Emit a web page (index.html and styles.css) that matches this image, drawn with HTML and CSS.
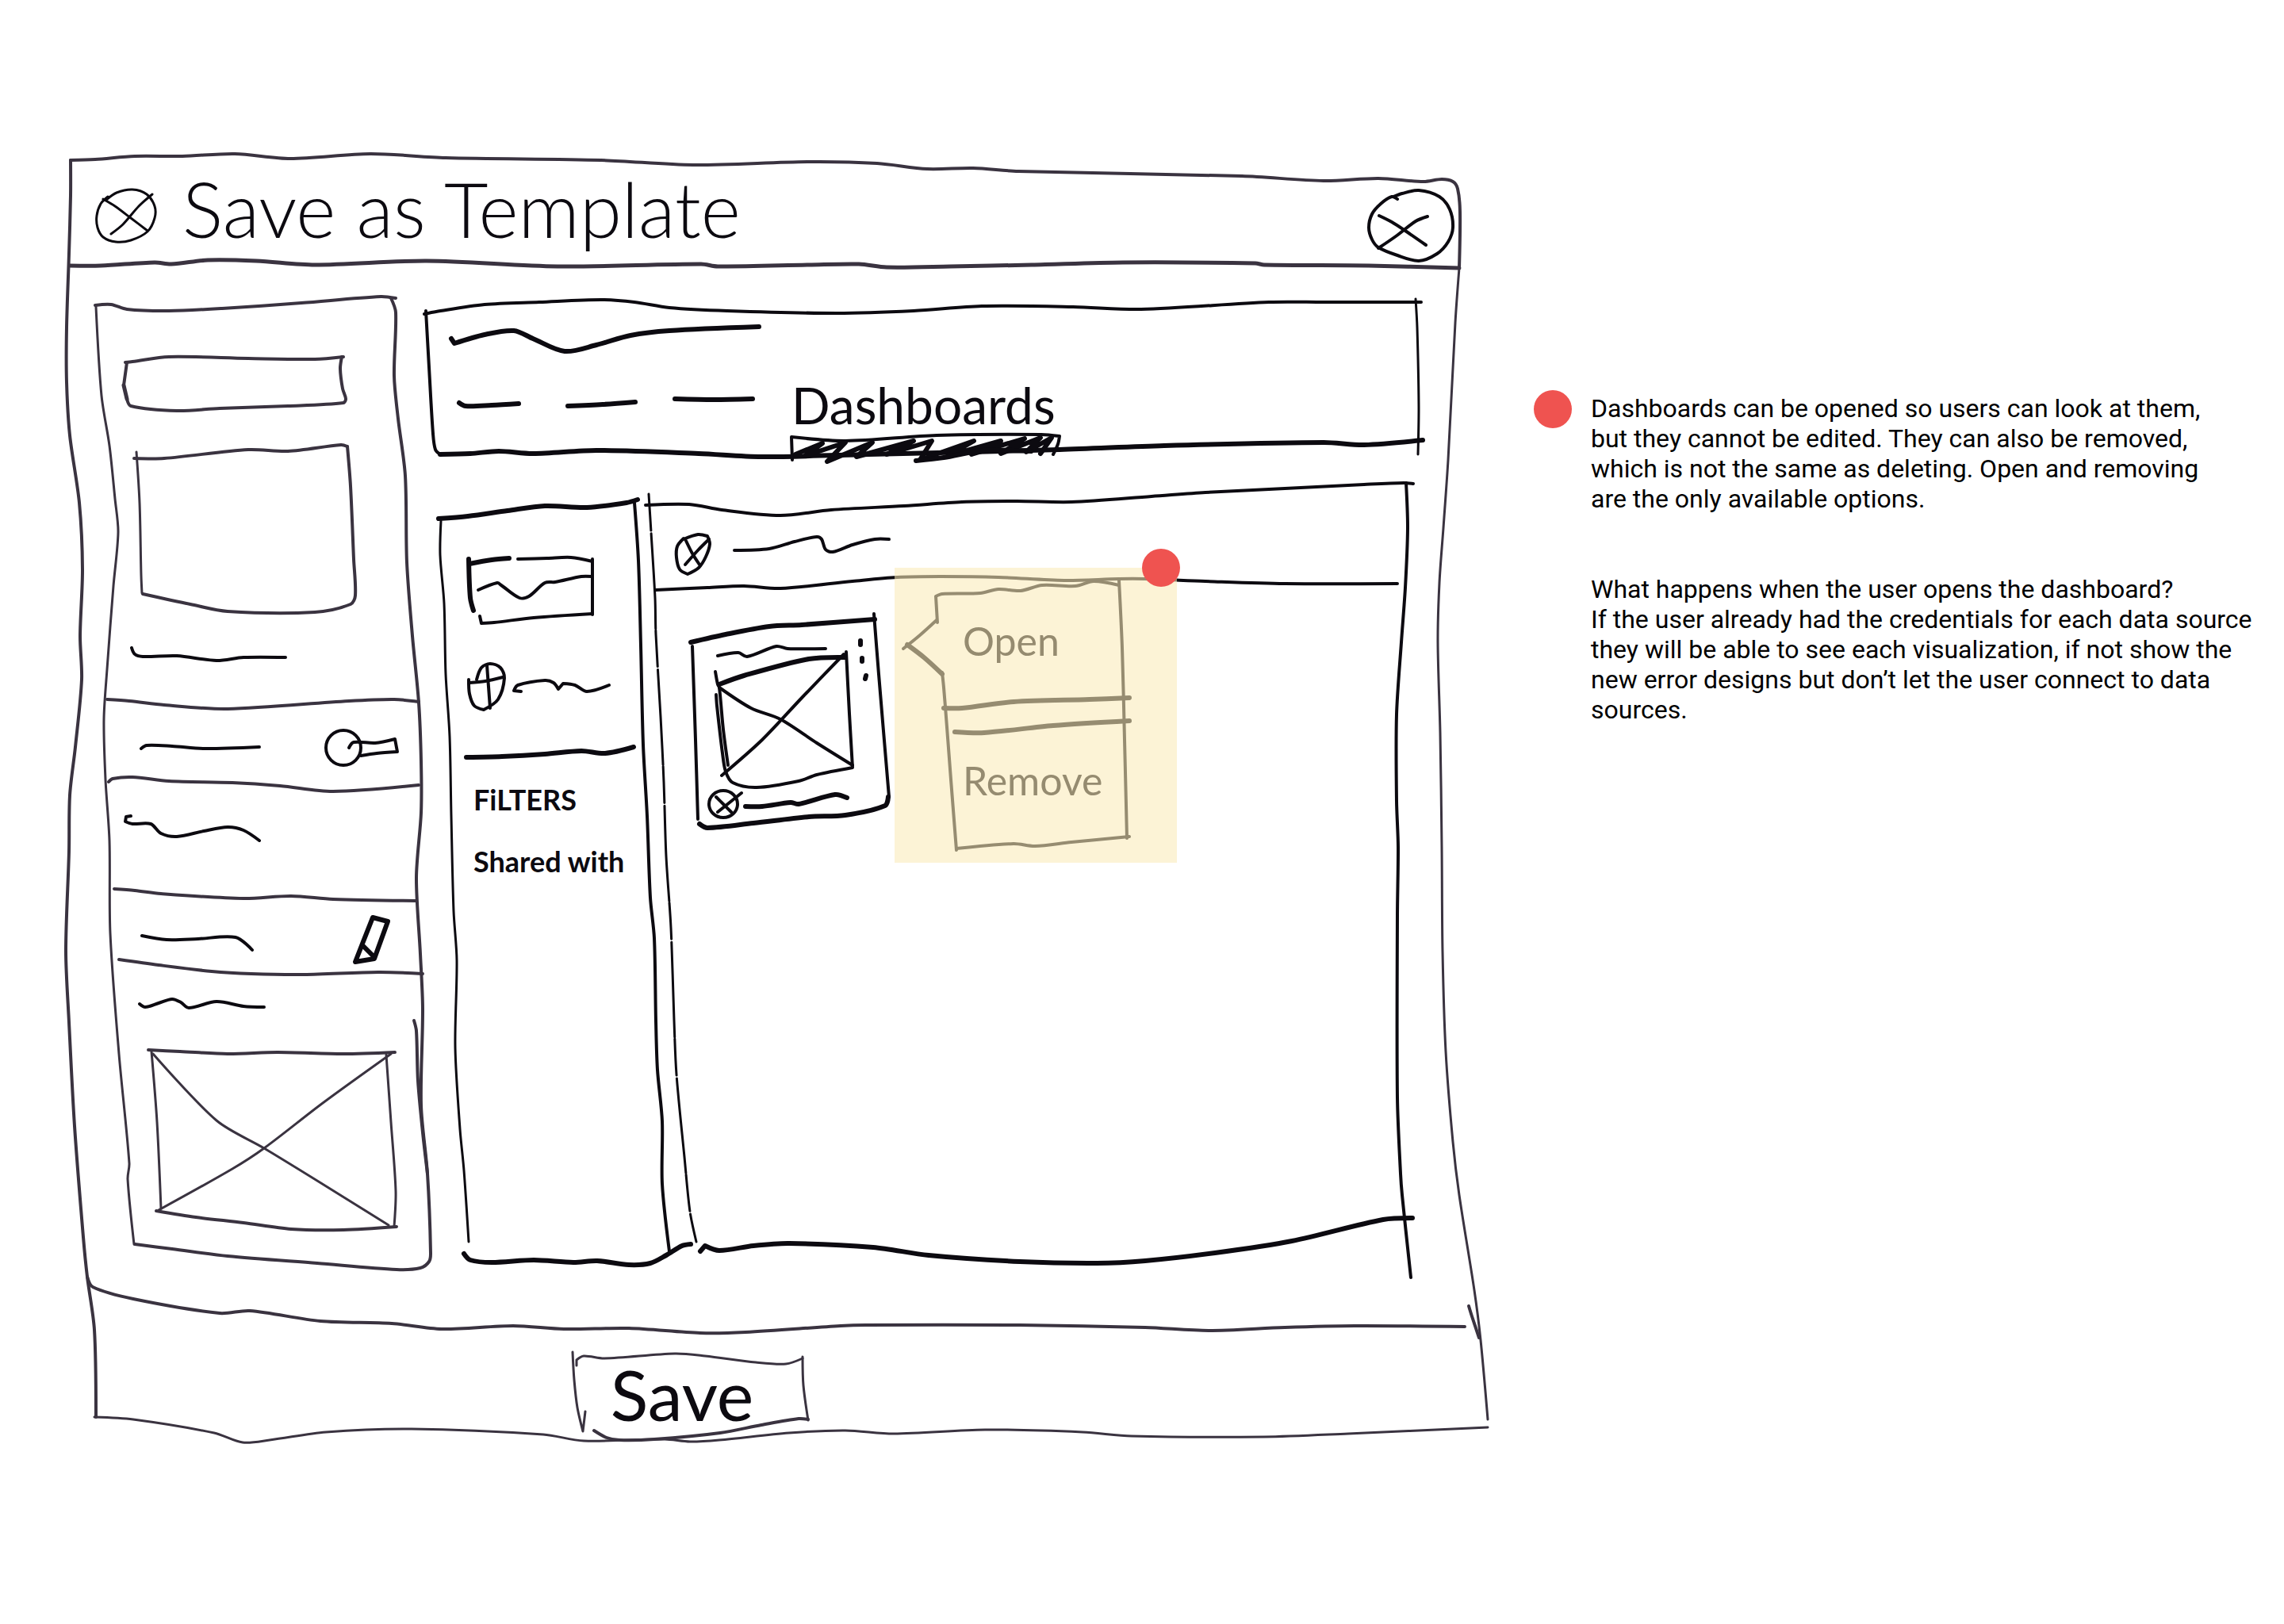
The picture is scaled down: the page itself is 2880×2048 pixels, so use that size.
FILE: index.html
```html
<!DOCTYPE html>
<html lang="en">
<head>
<meta charset="utf-8">
<title>Save as Template</title>
<link rel="stylesheet" href="styles.css">
<script src="sketch.js" defer></script>
</head>
<body>
<main class="page">
  <section class="wireframe">
    <svg class="ink" viewBox="80 190 1810 1640" aria-hidden="true">
      <g class="pen pen-frame">
        <polyline points="89,202 120,201 170,197 230,197 296,194 366,200 467,194 562,199 758,202 874,208 1020,204 1106,206 1169,213 1227,212 1284,216 1566,222 1669,228 1738,225 1795,229 1818,226 1832,229 1838,238 1841,267 1840,338"/>
        <polyline class="bold" points="88,335 127,335 195,331 216,333 262,328 323,329 397,334 538,329 703,336 884,333 905,336 1020,334 1083,333 1118,337 1198,336 1301,334 1416,331 1583,332 1594,334 1726,335 1840,338"/>
        <polyline points="89,202 89,247 87,320 84,413 84,482 88,549 100,634 104,718 101,802 103,857 95,942 88,1003 87,1074 83,1199 87,1289 94,1420 105,1560 110,1610 119,1677 121,1787"/>
        <polyline class="fine" points="1840,338 1835,407 1826,580 1820,666 1815,735 1813,810 1816,924 1818,1068 1819,1200 1823,1326 1832,1440 1840,1507 1859,1627 1867,1690 1876,1790"/>
        <polyline points="1852,1647 1856,1660 1865,1687"/>
        <polyline points="110,1610 117,1623 168,1638 277,1656 315,1653 404,1666 494,1669 557,1676 647,1672 711,1676 793,1675 883,1681 940,1680 1060,1672 1092,1671 1286,1671 1444,1674 1524,1678 1620,1674 1708,1672 1847,1673"/>
        <polyline class="fine" points="119,1787 168,1790 270,1807 306,1819 340,1816 411,1806 519,1802 685,1809 736,1817 838,1815 870,1818 907,1816 995,1807 1066,1804 1127,1808 1242,1803 1365,1806 1427,1811 1594,1812 1700,1808 1876,1800"/>
        <polyline class="fine" points="722,1705 724,1740 728,1775 735,1805 738,1780"/>
        <polyline class="fine" points="727,1722 727,1715 736,1710 762,1713 851,1707 889,1710 953,1718 991,1720 1012,1713"/>
        <polyline class="fine" points="1012,1711 1013,1747 1019,1791"/>
        <polyline points="1019,1790 1007,1789 960,1797 908,1807 825,1815 781,1816 765,1813 749,1804"/>
      </g>

      <g class="pen pen-frame">
        <polyline points="120,385 140,384 160,390 213,392 280,389 380,382 480,374 499,376"/>
        <polyline points="493,376 499,394 497,474 502,528 511,600 513,709 520,802 528,886 531,960 531,1025 525,1107 530,1203 533,1272 531,1394 539,1480 543,1580 541,1591 530,1599 500,1601 400,1593 287,1584 217,1575 170,1569"/>
        <polyline class="fine" points="121,387 128,499 138,562 145,629 149,671 143,739 135,844 131,907 133,983 138,1060 139,1177 150,1329 163,1467 161,1487 169,1569"/>
        <polyline points="522,1287 525,1300 527,1363 533,1428 539,1480"/>
        <polyline points="158,457 167,456 213,450 313,452 397,453 433,450"/>
        <polyline points="431,450 429,465 432,490 436,503 433,508 363,512 277,515 223,518 165,512 160,503"/>
        <polyline class="bold" points="160,503 156,486"/>
        <polyline points="156,486 160,457"/>
        <polyline points="169,578 207,578 313,567 363,569 430,561 438,563"/>
        <polyline points="438,563 442,613 446,705 448,751 442,762 397,772 287,771 240,762 180,749"/>
        <polyline class="fine" points="179,748 178,726 176,634 172,570"/>
        <polyline points="135,882 163,884 207,889 287,894 440,884 497,882 528,885"/>
        <polyline points="137,986 142,982 167,980 213,985 293,987 353,991 420,998 528,990"/>
        <polyline points="144,1121 170,1123 203,1127 307,1133 367,1130 420,1134 524,1136"/>
        <polyline points="150,1210 200,1217 267,1225 317,1228 383,1229 477,1226 533,1228"/>
        <polyline points="187,1324 227,1326 287,1329 350,1327 433,1329 498,1327"/>
        <polyline class="fine" points="191,1326 198,1415 203,1524"/>
        <polyline points="197,1527 247,1535 307,1542 367,1550 433,1551 500,1547"/>
        <polyline class="fine" points="487,1330 493,1415 499,1502 497,1547"/>
        <polyline class="fine" points="193,1329 273,1413 333,1448 400,1489 490,1545"/>
        <polyline class="fine" points="200,1526 293,1474 333,1448 407,1391 493,1329"/>
      </g>

      <g class="pen">
        <polyline points="166,817 170,825 180,828 223,827 273,833 307,829 360,829"/>
        <polyline points="178,944 185,940 217,941 257,944 327,942"/>
        <ellipse cx="433" cy="943" rx="22" ry="22"/>
        <polyline points="440,943 446,936 473,937 498,932 501,948 475,950 455,953"/>
        <polyline points="165,1029 159,1030 158,1036 167,1039 190,1039 203,1051 223,1055 257,1048 287,1043 307,1047 327,1060"/>
        <polyline points="179,1180 210,1185 250,1184 297,1182 318,1198"/>
        <path class="bold" d="M470 1157L489 1162L472 1209L448 1213L457 1190ZM457 1192L472 1207"/>
        <polyline points="176,1266 183,1270 200,1265 217,1260 228,1264 238,1271 273,1263 307,1269 333,1270"/>
      </g>

      <g class="pen fine">
        <polyline points="134,252 147,243 167,239 185,245 195,260 195,275 186,292 165,303 146,305 130,299 123,287 122,272 127,257 136,248"/>
        <polyline points="130,251 145,260 165,275 186,291"/>
        <polyline points="192,245 175,260 155,283 140,295"/>
      </g>
      <g class="pen">
        <polyline points="1762,251 1755,248 1741,257 1730,270 1726,287 1730,302 1738,312 1762,322 1789,329 1812,320 1826,305 1832,287 1828,264 1815,248 1789,240 1768,244 1757,248"/>
        <polyline points="1739,272 1755,280 1772,291 1798,309"/>
        <polyline points="1800,273 1785,279 1760,298 1738,313"/>
      </g>

      <g class="pen">
        <polyline points="535,396 550,393 611,384 680,381 758,378 800,381 844,388 917,392 1055,395 1152,392 1238,386 1353,387 1439,390 1600,381 1669,381 1792,381"/>
        <polyline class="fine" points="1785,377 1787,413 1789,513 1788,573"/>
        <polyline class="bold" points="555,573 593,572 629,569 672,572 752,568 881,572 960,576 1095,573 1336,567 1468,562 1669,558 1720,561 1794,555"/>
        <polyline points="537,392 541,463 546,547 549,567 555,573"/>
        <polyline class="bold" points="569,427 573,433 611,422 648,417 672,427 712,443 752,435 795,423 844,417 957,412"/>
        <polyline class="bold" points="579,508 587,512 620,511 654,509"/>
        <polyline class="bold" points="716,512 760,510 801,507"/>
        <polyline class="bold" points="851,503 900,504 949,503"/>
        <polyline points="999,580 998,551 1066,556 1181,549 1313,548 1336,550 1334,560 1328,573"/>
        <polyline class="bold" points="1003,573 1037,559 1015,575 1066,558 1043,582 1100,558 1080,576 1152,556 1118,573 1175,556 1160,580 1228,556 1195,575 1262,556 1225,573 1292,553 1262,572 1312,552 1294,570 1326,552 1312,572"/>
        <polyline class="bold" points="1155,581 1190,577 1240,568 1300,569"/>
      </g>

      <g class="pen">
        <polyline class="bold" points="553,654 590,651 640,644 687,638 740,640 790,634 804,630"/>
        <polyline class="fine" points="556,657 555,700 560,761 562,850 567,929 569,1029 572,1149 576,1211 574,1321 580,1424 585,1476 591,1566"/>
        <polyline points="800,634 805,707 808,814 811,939 816,1029 820,1132 825,1183 827,1287 829,1349 835,1414 835,1493 844,1578"/>
        <polyline class="bold" points="585,1581 593,1589 620,1592 673,1589 723,1592 753,1590 793,1595 820,1593 840,1583 860,1571 871,1569"/>
        <polyline class="fine broken" points="818,623 821,671 826,754 827,800 833,904 837,986 840,1080 846,1170 850,1287 853,1355 863,1459 870,1528 878,1566"/>
        <polyline class="bold" points="591,705 593,754 597,770"/>
        <polyline class="bold" points="592,711 620,706 642,704"/>
        <polyline points="653,705 690,704 720,703 747,708"/>
        <polyline points="747,705 747,775"/>
        <polyline points="605,777 607,786 623,785 673,779 747,774"/>
        <polyline points="603,744 627,735 632,738 655,754 667,752 687,735 700,734 733,727 747,727"/>
        <polyline points="601,857 607,842 618,837 631,842 636,855 628,882 610,895 598,890 592,875 591,857"/>
        <polyline points="614,839 618,893"/>
        <polyline points="592,861 612,859 634,854"/>
        <polyline points="657,872 648,871 653,864 687,858 698,861 704,869 710,862 725,864 740,872 768,864"/>
        <polyline class="bold" points="588,955 633,954 687,951 733,947 763,950 799,942"/>
      </g>

      <g class="pen">
        <polyline points="814,637 869,636 910,643 984,650 1048,643 1140,638 1213,633 1282,632 1351,633 1452,626 1520,621 1620,616 1720,611 1770,609 1782,610"/>
        <polyline points="1773,609 1775,666 1772,741 1767,810 1761,901 1761,1010 1763,1068 1762,1154 1762,1384 1766,1480 1768,1507 1779,1611"/>
        <polyline class="bold" points="883,1578 889,1571 907,1577 950,1571 995,1568 1101,1573 1171,1583 1286,1591 1383,1593 1444,1590 1532,1580 1629,1565 1744,1538 1781,1536"/>
        <polyline points="827,744 892,741 938,739 984,742 1075,733 1131,728 1186,727 1259,728 1342,732 1411,730 1443,730 1520,733 1620,736 1762,736"/>
        <polyline points="862,680 880,674 892,676 895,686 890,702 881,716 867,724 857,718 853,703 854,689 862,679"/>
        <polyline points="865,682 873,698 882,712"/>
        <polyline points="894,680 880,694 864,712"/>
        <polyline points="926,694 970,692 1002,683 1030,677 1036,680 1041,693 1050,696 1075,687 1103,680 1121,680"/>
        <polyline class="bold" points="871,810 915,800 970,790 1011,788 1103,781"/>
        <polyline points="1102,774 1108,850 1121,1005"/>
        <polyline class="bold" points="1120,1005 1116,1016 1066,1028 1020,1030 950,1038 892,1044 882,1039"/>
        <polyline points="873,815 877,933 880,1033"/>
        <polyline points="905,827 931,823 942,828 979,815 993,818 1041,818"/>
        <polyline class="bold" points="907,863 938,852 1020,831 1066,829"/>
        <polyline points="1067,822 1071,900 1075,968 1030,977 1007,985 954,993 924,987 915,973 911,950 904,890 903,876"/>
        <polyline points="902,847 905,863 907,867 912,920 918,965"/>
        <polyline points="907,867 947,893 984,907 1030,937 1075,965"/>
        <polyline points="1064,825 1011,880 961,933 910,978"/>
        <polyline class="bold" points="1085,808 1085,813"/>
        <polyline class="bold" points="1087,830 1087,834"/>
        <polyline class="bold" points="1092,852 1091,856"/>
        <ellipse cx="912" cy="1014" rx="18" ry="17"/>
        <polyline points="903,1005 912,1014 922,1024"/>
        <polyline points="935,1000 920,1012 905,1024"/>
        <polyline class="bold" points="940,1017 961,1017 997,1012 1007,1014 1053,1002 1068,1006"/>
      </g>

      <g class="pen">
        <polyline points="1182,785 1180,752 1188,749 1236,748 1259,743 1287,745 1314,738 1356,739 1379,733 1411,738"/>
        <polyline points="1411,732 1415,817 1418,933 1421,1057"/>
        <polyline points="1181,782 1160,801 1139,818"/>
        <polyline class="bold" points="1144,813 1165,829 1188,850"/>
        <polyline points="1188,848 1190,867 1194,917 1199,983 1206,1072"/>
        <polyline points="1206,1070 1278,1064 1305,1067 1351,1062 1424,1055"/>
        <polyline class="bold" points="1190,893 1213,893 1278,885 1374,882 1424,880"/>
        <polyline class="bold" points="1204,923 1241,924 1328,915 1424,909"/>
      </g>
    </svg>

    <header class="titlebar">
      <h1 class="title">Save as Template</h1>
      <button class="close" type="button" aria-label="Close"></button>
    </header>

    <div class="body">
      <nav class="tabs" aria-label="Sections">
        <a class="tab" href="#dashboards">Dashboards</a>
      </nav>
      <div class="workspace" id="dashboards">
        <aside class="filters">
          <h2 class="filters-title">FiLTERS</h2>
          <p class="filters-item">Shared with</p>
        </aside>
        <div class="content">
          <div class="menu">
            <button class="menu-item menu-open" type="button">Open</button>
            <button class="menu-item menu-remove" type="button">Remove</button>
            <span class="dot menu-dot"></span>
          </div>
        </div>
      </div>
    </div>

    <footer class="actions">
      <button class="save" type="button">Save</button>
    </footer>
  </section>

  <aside class="notes">
    <span class="dot"></span>
    <div class="notes-text">
      <p class="note note-narrow">Dashboards can be opened so users can look at them, but they cannot be edited. They can also be removed, which is not the same as deleting. Open and removing are the only available options.</p>
      <p class="note">What happens when the user opens the dashboard?<br>If the user already had the credentials for each data source they will be able to see each visualization, if not show the new error designs but don’t let the user connect to data sources.</p>
    </div>
  </aside>
</main>
</body>
</html>
```
FILE: styles.css
```css
* {
  box-sizing: border-box;
  min-width: 0;
  min-height: 0;
}

body {
  margin: 0;
  background: #fff;
  color: #000;
  font-family: Roboto, sans-serif;
  font-size: 32px;
  line-height: 38px;
}

h1, h2, p {
  margin: 0;
}

button {
  padding: 0;
  border: 0;
  background: none;
  color: inherit;
  cursor: pointer;
}

.page {
  display: grid;
  grid-template-columns: minmax(0, 1fr) 910px;
  gap: 44px;
  align-items: start;
  padding: 190px 36px 190px 80px;
}

/* Hand-drawn dialog: the strokes lie under the live text and controls */
.wireframe {
  position: relative;
  display: grid;
  grid-template-rows: 145fr 1338fr 157fr;
  aspect-ratio: 1810 / 1640;
  color: #0c0a10;
  font-family: Lato, "Open Sans", sans-serif;
}

.wireframe > * {
  position: relative;
}

.wireframe > .ink {
  position: absolute;
  inset: 0;
  width: 100%;
  height: 100%;
  overflow: visible;
}

.pen {
  fill: none;
  stroke: #0c0a10;
  stroke-width: 4;
  stroke-linecap: round;
  stroke-linejoin: round;
}

.pen-frame {
  stroke: #3a3340;
}

.pen .bold {
  stroke-width: 6;
}

.pen-frame .bold {
  stroke-width: 5;
}

.pen .fine,
.pen.fine {
  stroke-width: 3;
}

.broken {
  stroke-dasharray: 46 4 120 2;
}

.titlebar {
  display: grid;
  grid-template-columns: 150fr 1496fr 106fr 58fr;
  align-items: center;
}

.title {
  grid-column: 2;
  font-size: 96px;
  font-weight: 300;
  line-height: 104px;
  white-space: nowrap;
}

.close {
  grid-column: 3;
  height: 90px;
  border-radius: 50%;
}

.body {
  display: grid;
  grid-template-columns: 457fr 1255fr 98fr;
  grid-template-rows: 45fr 195fr 65fr 940fr 93fr;
}

.tabs {
  grid-area: 2 / 2;
  display: grid;
  grid-template-columns: 461fr 360fr 434fr;
  grid-template-rows: 93fr 76fr 26fr;
}

.tab {
  grid-area: 2 / 2;
  color: inherit;
  font-size: 64px;
  line-height: 76px;
  text-decoration: none;
}

.workspace {
  grid-area: 4 / 2;
  display: grid;
  grid-template-columns: 18fr 260fr 10fr 967fr;
}

.filters {
  grid-column: 2;
  display: grid;
  grid-template-columns: 42fr 218fr;
  grid-template-rows: 340fr 56fr 22fr 56fr 466fr;
  align-items: center;
  font-size: 36px;
  white-space: nowrap;
}

.filters-title {
  grid-area: 2 / 2;
  font-size: 36px;
  font-weight: 700;
}

.filters-item {
  grid-area: 4 / 2;
  font-weight: 700;
}

.content {
  grid-column: 4;
  display: grid;
  grid-template-columns: 303fr 356fr 308fr;
  grid-template-rows: 76fr 372fr 492fr;
}

.menu {
  grid-area: 2 / 2;
  position: relative;
  display: grid;
  grid-template-columns: 62fr 225fr 69fr;
  grid-template-rows: 24fr 135fr 38fr 142fr 33fr;
  background: rgba(250, 234, 184, 0.58);
}

.menu-item {
  padding-left: 24px;
  color: #958b70;
  font-family: inherit;
  font-size: 50px;
  text-align: left;
}

.menu-open {
  grid-area: 2 / 2;
}

.menu-remove {
  grid-area: 4 / 2;
}

.actions {
  display: grid;
  grid-template-columns: 642fr 276fr 892fr;
  grid-template-rows: 35fr 100fr 22fr;
}

.save {
  grid-area: 2 / 2;
  font-family: inherit;
  font-size: 88px;
  line-height: 96px;
}

.notes {
  display: flex;
  gap: 24px;
  padding-top: 302px;
}

.dot {
  flex: none;
  width: 48px;
  height: 48px;
  border-radius: 50%;
  background: #ef5350;
}

.menu-dot {
  position: absolute;
  top: -24px;
  right: -4px;
}

.notes-text {
  display: grid;
  gap: 76px;
  padding-top: 4px;
}

.note-narrow {
  max-width: 780px;
}
```
FILE: sketch.js
```js
// Turns each polyline of the drawing into a smooth pen stroke; sharp turns stay sharp.
const unit = (from, to) => {
  const x = to[0] - from[0];
  const y = to[1] - from[1];
  const len = Math.hypot(x, y) || 1;
  return [x / len, y / len];
};

document.querySelectorAll(".ink polyline").forEach((line) => {
  const p = line.getAttribute("points").trim().split(/\s+/).map((s) => s.split(",").map(Number));
  const tangents = p.map((point, i) => {
    const before = p[i - 1];
    const after = p[i + 1];
    if (!before || !after) return [0, 0];
    const a = unit(before, point);
    const b = unit(point, after);
    return a[0] * b[0] + a[1] * b[1] < 0.55 ? [0, 0] : unit(before, after);
  });
  let d = `M${p[0]}`;
  for (let i = 0; i < p.length - 1; i++) {
    const b = p[i];
    const c = p[i + 1];
    const reach = Math.hypot(c[0] - b[0], c[1] - b[1]) * 0.3;
    const [s, t] = [tangents[i], tangents[i + 1]];
    d += `C${b[0] + s[0] * reach} ${b[1] + s[1] * reach} ${c[0] - t[0] * reach} ${c[1] - t[1] * reach} ${c}`;
  }
  const path = document.createElementNS("http://www.w3.org/2000/svg", "path");
  path.setAttribute("d", d);
  path.setAttribute("class", line.getAttribute("class") || "");
  line.replaceWith(path);
});
```
